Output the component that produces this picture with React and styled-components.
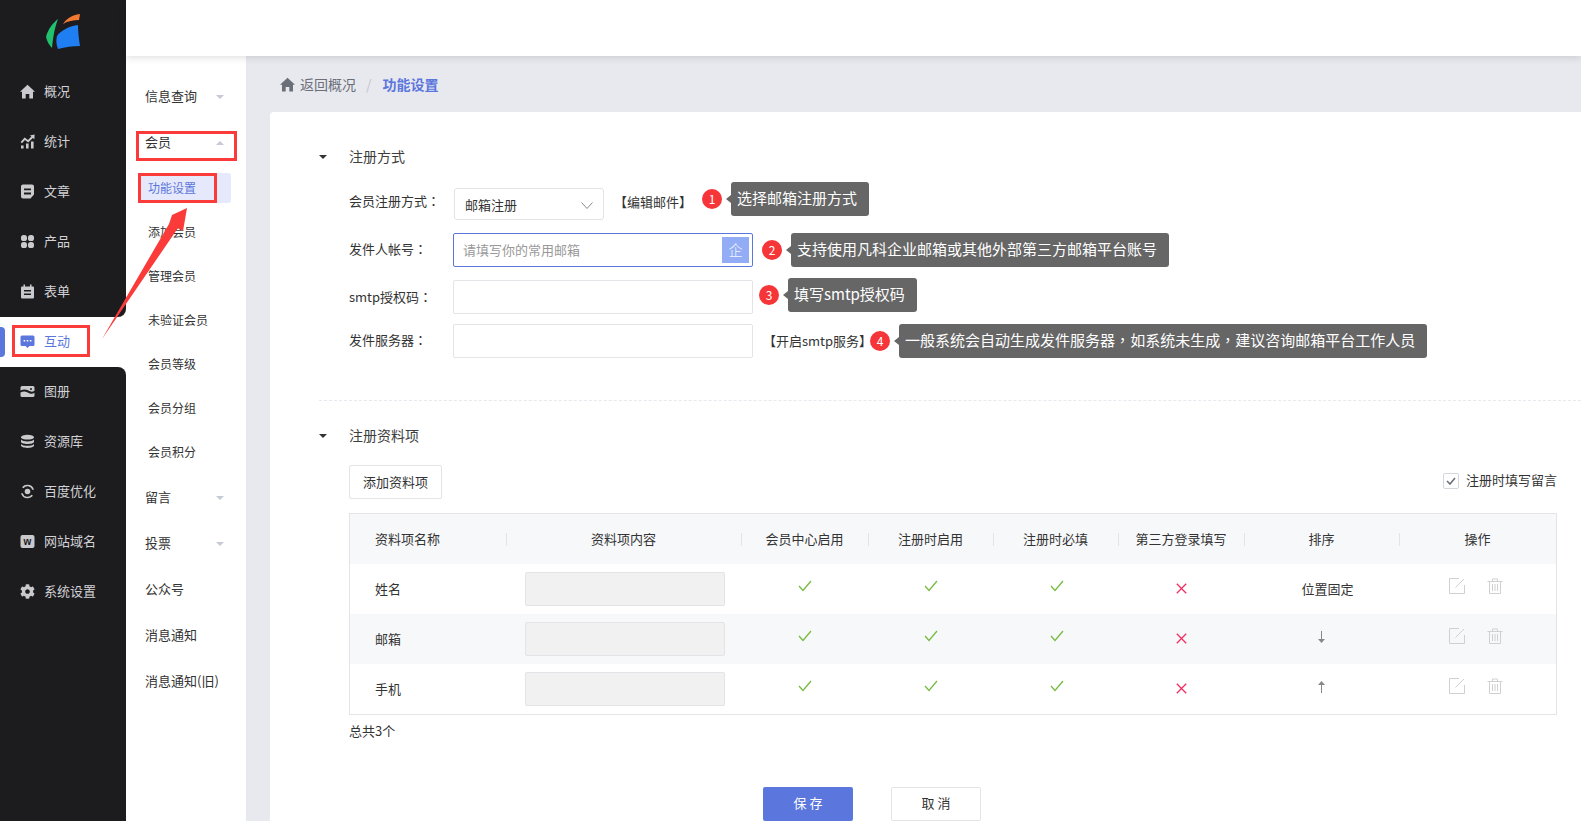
import React from "react";
import styled, { createGlobalStyle } from "styled-components";
import { FaCog } from "react-icons/fa";

const Global = createGlobalStyle`
  html, body { margin: 0; padding: 0; height: 100%; background: #fff; }
  body { font-family: "Noto Sans CJK SC", "Noto Sans", sans-serif; font-size: 13px; color: #333; }
  * { box-sizing: border-box; }
`;

const Page = styled.div`
  position: relative; display: flex; width: 1581px; height: 821px; overflow: hidden; background: #fff;
`;
const Sidebar = styled.aside`
  flex: 0 0 126px; display: flex; flex-direction: column; background: #fff;
`;
const LogoBox = styled.div`
  flex: 0 0 67px; background: #1c1c1e; padding: 14px 0 0 46px;
`;
const NavItem = styled.div`
  position: relative; display: flex; align-items: center; height: 50px; padding-left: 20px; gap: 9px;
  background: ${p => (p.$active ? "#fff" : "#1c1c1e")};
  color: ${p => (p.$active ? "#5b76dd" : "#d2d2d6")};
  border-bottom-right-radius: ${p => (p.$before ? "8px" : "0")};
  border-top-right-radius: ${p => (p.$after ? "8px" : "0")};
`;
const NavIcon = styled.span`
  display: flex; align-items: center; justify-content: center; width: 15px; height: 15px; margin-bottom: 2px;
  color: ${p => (p.$active ? "#5b76dd" : "#c9c9ce")};
`;
const NavLabel = styled.span` padding-bottom: 3px; `;
const NavPill = styled.i`
  position: absolute; left: 0; top: 10px; width: 5px; height: 30px; background: #5b76dd; border-radius: 0 4px 4px 0;
`;
const NavFill = styled.div` flex: 1; background: #1c1c1e; `;
const RedBox = styled.div`
  position: absolute; border: 3px solid #fb3a3a; pointer-events: none;
`;
const NavRedBox = styled(RedBox)` left: 12px; top: 8px; width: 78px; height: 32px; `;
const TopRedBox = styled(RedBox)` left: 10px; top: 11px; width: 101px; height: 30px; `;
const PillRedBox = styled(RedBox)` left: 0; top: 0; width: 79px; height: 30px; `;

const Body = styled.div` flex: 1; display: flex; flex-direction: column; min-width: 0; `;
const Header = styled.header`
  flex: 0 0 56px; background: #fff; box-shadow: 0 2px 7px rgba(0,0,0,.12); position: relative; z-index: 2;
`;
const Under = styled.div` flex: 1; display: flex; min-height: 0; `;
const SubMenu = styled.nav` flex: 0 0 120px; padding-top: 18px; background: #fff; `;
const SubTop = styled.div`
  position: relative; display: flex; align-items: center; justify-content: space-between;
  height: 46px; padding: 0 22px 3px 19px; color: #333; font-size: 13px;
`;
const Caret = styled.i`
  width: 0; height: 0; margin-top: 3px; border-left: 4px solid transparent; border-right: 4px solid transparent;
  ${p => (p.$up ? "border-bottom: 4px solid #c6c9d6;" : "border-top: 4px solid #c6c9d6;")}
`;
const SubList = styled.div` padding-top: 1px; `;
const SubItem = styled.div`
  display: flex; align-items: center; height: 44px; padding: 0 0 3px 22px; font-size: 12px; color: #333;
`;
const SubPill = styled.div`
  position: relative; display: flex; align-items: center; width: 93px; height: 30px; margin: 6px 0 8px 12px;
  padding: 0 0 1px 10px; font-size: 12px; color: #5b76dd; background: #e6e9fb; border-radius: 3px;
`;

const Main = styled.main`
  flex: 1; display: flex; flex-direction: column; background: #e8e9ee; padding-left: 24px; min-width: 0;
`;
const Crumbs = styled.div`
  flex: 0 0 56px; display: flex; align-items: center; padding-left: 10px; font-size: 14px; color: #6b6f7a;
`;
const CrumbIcon = styled.svg` margin-right: 5px; `;
const CrumbSep = styled.span` margin: 0 11px 0 10px; color: #c4c6ce; `;
const CrumbNow = styled.span` color: #5b76dd; font-weight: 700; `;
const Card = styled.section`
  flex: 1; background: #fff; border-radius: 4px 0 0 0; padding: 35px 24px 0 49px; overflow: hidden;
`;
const SectionHead = styled.div`
  display: flex; align-items: center; gap: 22px; height: 20px; font-size: 14px; color: #3d3d3d;
`;
const HeadText = styled.span` padding-bottom: 3px; `;
const HeadCaret = styled.i`
  width: 0; height: 0; border-left: 4px solid transparent; border-right: 4px solid transparent; border-top: 4px solid #333;
`;
const Rows = styled.div` margin: 15px 0 0 30px; `;
const Row = styled.div`
  display: flex; align-items: flex-start; height: ${p => p.$h}px; margin-bottom: ${p => p.$mb || 0}px;
`;
const Label = styled.label`
  flex: 0 0 104px; line-height: 20px; margin-top: ${p => p.$mt}px; font-size: 13px; color: #333;
`;
const Punct = styled.span` font-family: "Noto Sans CJK TC", sans-serif; `;
const Select = styled.div`
  display: flex; align-items: center; justify-content: space-between; width: 150px; height: 32px; margin: 6px 0 0 1px;
  padding: 0 10px; border: 1px solid #e3e3e8; border-radius: 3px; background: #fff;
`;
const Chevron = styled.svg` margin-top: 3px; `;
const LinkText = styled.span`
  line-height: 20px; margin: ${p => p.$mt}px 0 0 ${p => p.$ml}px; color: #333; white-space: nowrap;
`;
const InputBox = styled.div`
  display: flex; align-items: center; width: 300px; height: 34px; margin-top: ${p => p.$mt || 0}px;
  padding: 0 3px 0 9px; background: #fff; border-radius: 2px;
  border: 1px solid ${p => (p.$focus ? "#5b76dd" : "#e3e3e8")};
`;
const TextInput = styled.input`
  flex: 1; min-width: 0; border: 0; outline: 0; padding: 0 0 2px; background: transparent; font: inherit; font-size: 13px; color: #333;
  &::placeholder { color: #999; opacity: 1; }
`;
const Addon = styled.span`
  flex: 0 0 27px; height: 26px; display: flex; align-items: center; justify-content: center; padding-bottom: 2px;
  background: #92acf5; color: #f4f6ff; font-size: 14px; font-weight: 300;
`;
const Badge = styled.span`
  flex: 0 0 20px; height: 20px; margin: 7px 0 0 ${p => p.$ml}px; display: flex; align-items: center; justify-content: center;
  padding-bottom: 1px; border-radius: 50%; background: #f53537; color: #fff; font-size: 12px;
`;
const Tip = styled.span`
  position: relative; height: 34px; line-height: 31px; margin-left: 9px; padding: 0 12px 0 6px;
  background: #666; color: #fff; font-size: 15px; border-radius: 3px; white-space: nowrap;
  &::before {
    content: ""; position: absolute; left: -5px; top: 13px; width: 0; height: 0;
    border-top: 4px solid transparent; border-bottom: 4px solid transparent; border-right: 5px solid #666;
  }
`;
const Divider = styled.div`
  margin: 42px -24px 25px 0; border-top: 1px dashed #e8e9ee;
`;
const Toolbar = styled.div`
  display: flex; align-items: flex-start; justify-content: space-between; height: 34px; margin: 19px 0 14px 30px;
`;
const AddBtn = styled.button`
  width: 93px; height: 34px; padding: 0 0 1px; border: 1px solid #e3e3e8; border-radius: 2px; background: #fff;
  font: inherit; font-size: 13px; color: #333;
`;
const CheckLabel = styled.div`
  display: flex; align-items: center; gap: 7px; height: 16px; margin-top: 8px; font-size: 13px; color: #333;
`;
const CheckText = styled.span` padding-bottom: 3px; `;
const CheckBox = styled.span`
  flex: 0 0 16px; height: 16px; display: flex; align-items: center; justify-content: center;
  border: 1px solid #d5d6dc; border-radius: 2px; background: #fff;
`;
const Table = styled.div`
  margin-left: 30px; border: 1px solid #e3e3e8;
`;
const TR = styled.div`
  display: grid; grid-template-columns: 156px 235px 127px 125px 125px 126px 155px 1fr; height: 50px;
  background: ${p => (p.$shade ? "#f7f8fa" : "#fff")};
`;
const TH = styled.div`
  position: relative; display: flex; align-items: center; justify-content: ${p => (p.$left ? "flex-start" : "center")};
  padding: 0 0 2px ${p => (p.$left ? "25px" : "0")}; font-size: 13px; color: #333;
  ${p => !p.$left && `&::before { content: ""; position: absolute; left: 0; top: 19px; width: 1px; height: 13px; background: #e3e3e8; }`}
`;
const TD = styled.div`
  display: flex; align-items: center; justify-content: center; font-size: 13px; color: #333;
`;
const NameTD = styled(TD)` justify-content: flex-start; padding: 0 0 2px 25px; `;
const BoxTD = styled(TD)` justify-content: flex-start; padding-left: 19px; `;
const Disabled = styled.div`
  width: 200px; height: 34px; background: #f1f1f1; border: 1px solid #e3e3e8; border-radius: 2px;
`;
const Nudge = styled.span`
  display: flex; margin: 0 0 ${p => p.$b || 0}px ${p => p.$l || 0}px;
`;
const Ops = styled.div` display: flex; gap: 22px; margin: 0 0 7px -4px; `;
const Total = styled.div` margin: 6px 0 46px 30px; line-height: 20px; font-size: 13px; color: #333; `;
const Actions = styled.div` display: flex; gap: 38px; margin-left: 444px; `;
const SaveBtn = styled.button`
  width: 90px; height: 34px; padding: 0 0 3px; border: 0; border-radius: 2px; background: #5b76dd; color: #fff; font: inherit; font-size: 13px;
`;
const CancelBtn = styled.button`
  width: 90px; height: 34px; padding: 0 0 3px; border: 1px solid #e3e3e8; border-radius: 2px; background: #fff; color: #333; font: inherit; font-size: 13px;
`;
const ArrowSvg = styled.svg`
  position: absolute; left: 0; top: 0; z-index: 5; pointer-events: none;
`;

const I = ({ children }) => (
  <svg width="15" height="15" viewBox="0 0 15 15" fill="currentColor">{children}</svg>
);
const homePath = "M7.5 .8 L15 7.8 H13 V14.5 H9.3 V10 H5.7 V14.5 H2 V7.8 H0 Z";
const icons = {
  home: <I><path d={homePath} /></I>,
  chart: (
    <I>
      <rect x="1" y="11.5" width="2.6" height="3" /><rect x="6" y="9.5" width="2.6" height="5" /><rect x="11" y="7.5" width="2.6" height="7" />
      <path d="M.6 8 L4.6 3.6 L8 6 L11.4 2.6 L9.8 1.4 L14.6 .6 L14.4 5.2 L12.8 3.9 L8.2 8.4 L4.9 6 L2 9.2 Z" />
    </I>
  ),
  article: (
    <I>
      <path fillRule="evenodd" d="M3 .6h9a2 2 0 0 1 2 2v8L10.5 14.4H3a2 2 0 0 1-2-2V2.6a2 2 0 0 1 2-2zM4 4.4v1.8h7V4.4zM4 8.6v1.8h7V8.6z" />
    </I>
  ),
  product: (
    <I>
      <rect x="1" y="1" width="6" height="6" rx="2.6" /><rect x="8" y="1" width="6" height="6" rx="2.6" />
      <rect x="1" y="8" width="6" height="6" rx="2.6" /><rect x="8" y="8" width="6" height="6" rx="2.6" />
    </I>
  ),
  form: (
    <I>
      <path fillRule="evenodd" d="M3.5 0.5h1.5v2h5v-2h1.5v2H13a1 1 0 0 1 1 1V13.5a1 1 0 0 1-1 1H2a1 1 0 0 1-1-1V3.5a1 1 0 0 1 1-1h1.5zM4 6v1.5h7V6zM4 9.5V11h7V9.5z" />
    </I>
  ),
  talk: (
    <I>
      <path fillRule="evenodd" d="M2 1.5h11a1.5 1.5 0 0 1 1.5 1.5v7.5A1.5 1.5 0 0 1 13 12H9.5l-2 2-2-2H2A1.5 1.5 0 0 1 .5 10.5V3A1.5 1.5 0 0 1 2 1.5zM3.6 6v1.6h1.6V6zM6.7 6v1.6h1.6V6zM9.8 6v1.6h1.6V6z" />
    </I>
  ),
  album: (
    <I>
      <path fillRule="evenodd" d="M2 2h11a1.5 1.5 0 0 1 1.5 1.5v3.2C12 8.6 10.5 7.6 8.5 6.6 5.5 5 3 5.2.5 6.6V3.5A1.5 1.5 0 0 1 2 2zM11 4a1 1 0 1 0 0 2 1 1 0 0 0 0-2zM.5 8.6C3 7.2 5 7 7.6 8.4c2.6 1.4 4.6 2.2 6.9.4v2.7A1.5 1.5 0 0 1 13 13H2a1.5 1.5 0 0 1-1.5-1.5z" />
    </I>
  ),
  db: (
    <I>
      <ellipse cx="7.5" cy="3.2" rx="6.5" ry="2.4" />
      <path d="M1 5.6c1.4 1.4 3.8 1.9 6.5 1.9s5.1-.5 6.5-1.9v2.1c0 1.3-2.9 2.3-6.5 2.3S1 9 1 7.7z" />
      <path d="M1 9.9c1.4 1.4 3.8 1.9 6.5 1.9s5.1-.5 6.5-1.9v1.7c0 1.3-2.9 2.4-6.5 2.4S1 12.9 1 11.6z" />
    </I>
  ),
  ring: (
    <I>
      <circle cx="7.5" cy="7.5" r="2.8" />
      <path d="M7.5 0.8a6.7 6.7 0 0 1 6.5 5h-1.7a5 5 0 0 0-8.8-1.6L2 3.2A6.7 6.7 0 0 1 7.5 .8z" />
      <path d="M7.5 14.2a6.7 6.7 0 0 1-6.5-5h1.7a5 5 0 0 0 8.8 1.6l1.5 1A6.7 6.7 0 0 1 7.5 14.2z" />
    </I>
  ),
  web: (
    <I>
      <rect x="0.5" y="1" width="14" height="13" rx="2" />
      <text x="7.5" y="11" textAnchor="middle" fontSize="10" fontWeight="700" fontFamily="Liberation Sans, sans-serif" fill="#1c1c1e">w</text>
    </I>
  ),
  cog: <FaCog size={15} />,
};

const nav = [
  ["home", "概况"], ["chart", "统计"], ["article", "文章"], ["product", "产品"], ["form", "表单"], ["talk", "互动"],
  ["album", "图册"], ["db", "资源库"], ["ring", "百度优化"], ["web", "网站域名"], ["cog", "系统设置"],
];
const ACTIVE = 5;

const Tick = () => (
  <svg width="14" height="12" viewBox="0 0 14 12" fill="none" stroke="#77bb41" strokeWidth="1.3"><path d="M1 6l4 4.5L13 1" /></svg>
);
const Cross = () => (
  <svg width="11" height="11" viewBox="0 0 11 11" fill="none" stroke="#ee2f63" strokeWidth="1.3"><path d="M.8.8l9.4 9.4M10.2.8L.8 10.2" /></svg>
);
const Edit = () => (
  <svg width="16" height="16" viewBox="0 0 16 16" fill="none" stroke="#d0d0d0" strokeWidth="1"><path d="M10 .5H.5v15h15V7M6.5 9.5L15 1" /></svg>
);
const Trash = () => (
  <svg width="16" height="16" viewBox="0 0 16 16" fill="none" stroke="#d0d0d0" strokeWidth="1"><path d="M.5 3.5h15M5.5 3.5V1h5v2.5M2.5 3.5v12h11v-12M5.5 6v7M8 6v7M10.5 6v7" /></svg>
);
const Down = () => (
  <svg width="7" height="12" viewBox="0 0 7 12" fill="#888"><path d="M3 0h1v8h3L3.5 12 0 8h3z" /></svg>
);
const Up = () => (
  <svg width="7" height="12" viewBox="0 0 7 12" fill="#888"><path d="M3 12h1V4h3L3.5 0 0 4h3z" /></svg>
);

const rows = [
  { name: "姓名", sort: <Nudge $l={12} $b={2}>位置固定</Nudge> },
  { name: "邮箱", sort: <Nudge $b={4}><Down /></Nudge>, shade: true },
  { name: "手机", sort: <Nudge $b={5}><Up /></Nudge> },
];
const heads = ["资料项内容", "会员中心启用", "注册时启用", "注册时必填", "第三方登录填写", "排序", "操作"];
const subs = ["添加会员", "管理会员", "未验证会员", "会员等级", "会员分组", "会员积分"];

export default function App() {
  return (
    <Page>
      <Global />
      <Sidebar>
        <LogoBox>
          <svg width="36" height="36" viewBox="0 0 36 36">
            <path d="M0 23 C2 15 7 9 12 5 C9 13 7 22 6 34 C3 31 1 27 0 23Z" fill="#21c26f" />
            <path d="M17 10 C20 5 26 1 34 0 L33 6 C27 6 22 7 17 10Z" fill="#f47a32" />
            <path d="M11 22 C15 16 24 12 32 11 C32 18 33 26 34 32 C27 32 19 33 12 35 C10 30 10 26 11 22Z" fill="#1f7ef2" />
          </svg>
        </LogoBox>
        {nav.map(([ic, label], i) => (
          <NavItem key={label} $active={i === ACTIVE} $before={i === ACTIVE - 1} $after={i === ACTIVE + 1}>
            {i === ACTIVE && <NavPill />}
            <NavIcon $active={i === ACTIVE}>{icons[ic]}</NavIcon>
            <NavLabel>{label}</NavLabel>
            {i === ACTIVE && <NavRedBox />}
          </NavItem>
        ))}
        <NavFill />
      </Sidebar>
      <Body>
        <Header />
        <Under>
          <SubMenu>
            <SubTop>信息查询<Caret /></SubTop>
            <SubTop>会员<Caret $up /><TopRedBox /></SubTop>
            <SubList>
              <SubPill>功能设置<PillRedBox /></SubPill>
              {subs.map(s => <SubItem key={s}>{s}</SubItem>)}
            </SubList>
            <SubTop>留言<Caret /></SubTop>
            <SubTop>投票<Caret /></SubTop>
            <SubTop>公众号</SubTop>
            <SubTop>消息通知</SubTop>
            <SubTop>消息通知(旧)</SubTop>
          </SubMenu>
          <Main>
            <Crumbs>
              <CrumbIcon width="15" height="15" viewBox="0 0 15 15" fill="#6b6f7a"><path d={homePath} /></CrumbIcon>
              返回概况<CrumbSep>/</CrumbSep><CrumbNow>功能设置</CrumbNow>
            </Crumbs>
            <Card>
              <SectionHead><HeadCaret /><HeadText>注册方式</HeadText></SectionHead>
              <Rows>
                <Row $h={38} $mb={13}>
                  <Label $mt={9}>会员注册方式<Punct>：</Punct></Label>
                  <Select>
                    邮箱注册
                    <Chevron width="12" height="7" viewBox="0 0 12 7" fill="none" stroke="#888"><path d="M.5.5L6 6.5 11.5.5" /></Chevron>
                  </Select>
                  <LinkText $mt={10} $ml={10}>【编辑邮件】</LinkText>
                  <Badge $ml={10}>1</Badge>
                  <Tip>选择邮箱注册方式</Tip>
                </Row>
                <Row $h={34} $mb={11}>
                  <Label $mt={6}>发件人帐号<Punct>：</Punct></Label>
                  <InputBox $focus>
                    <TextInput placeholder="请填写你的常用邮箱" />
                    <Addon>企</Addon>
                  </InputBox>
                  <Badge $ml={9}>2</Badge>
                  <Tip>支持使用凡科企业邮箱或其他外部第三方邮箱平台账号</Tip>
                </Row>
                <Row $h={36} $mb={10}>
                  <Label $mt={9}>smtp授权码<Punct>：</Punct></Label>
                  <InputBox $mt={2}><TextInput /></InputBox>
                  <Badge $ml={6}>3</Badge>
                  <Tip>填写smtp授权码</Tip>
                </Row>
                <Row $h={34}>
                  <Label $mt={6}>发件服务器<Punct>：</Punct></Label>
                  <InputBox><TextInput /></InputBox>
                  <LinkText $mt={7} $ml={10}>【开启smtp服务】</LinkText>
                  <Badge $ml={-2}>4</Badge>
                  <Tip>一般系统会自动生成发件服务器<Punct>，</Punct>如系统未生成<Punct>，</Punct>建议咨询邮箱平台工作人员</Tip>
                </Row>
              </Rows>
              <Divider />
              <SectionHead><HeadCaret /><HeadText>注册资料项</HeadText></SectionHead>
              <Toolbar>
                <AddBtn>添加资料项</AddBtn>
                <CheckLabel>
                  <CheckBox>
                    <svg width="10" height="8" viewBox="0 0 10 8" fill="none" stroke="#6b6f7a" strokeWidth="1.6"><path d="M1 4l3 3 5-6" /></svg>
                  </CheckBox>
                  <CheckText>注册时填写留言</CheckText>
                </CheckLabel>
              </Toolbar>
              <Table>
                <TR $shade>
                  <TH $left>资料项名称</TH>
                  {heads.map(h => <TH key={h}>{h}</TH>)}
                </TR>
                {rows.map(r => (
                  <TR key={r.name} $shade={r.shade}>
                    <NameTD>{r.name}</NameTD>
                    <BoxTD><Disabled /></BoxTD>
                    <TD><Nudge $b={6}><Tick /></Nudge></TD>
                    <TD><Nudge $b={6}><Tick /></Nudge></TD>
                    <TD><Nudge $b={6} $l={2}><Tick /></Nudge></TD>
                    <TD><Nudge $b={2}><Cross /></Nudge></TD>
                    <TD>{r.sort}</TD>
                    <TD><Ops><Edit /><Trash /></Ops></TD>
                  </TR>
                ))}
              </Table>
              <Total>总共3个</Total>
              <Actions>
                <SaveBtn>保 存</SaveBtn>
                <CancelBtn>取 消</CancelBtn>
              </Actions>
            </Card>
          </Main>
        </Under>
      </Body>
      <ArrowSvg width="1581" height="821" viewBox="0 0 1581 821">
        <polygon points="102,339 169,224 172,215 187,208 183,231 178,228" fill="#fb3a3a" />
      </ArrowSvg>
    </Page>
  );
}
